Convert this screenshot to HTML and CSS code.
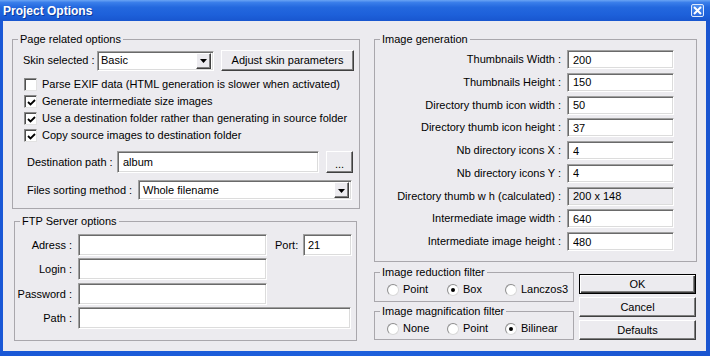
FILE: index.html
```html
<!DOCTYPE html>
<html>
<head>
<meta charset="utf-8">
<link rel="stylesheet" href="styles.css">
</head>
<body>
<div class="window">
  <div class="titlebar">
    <span class="title">Project Options</span>
    <span class="close"><svg width="9" height="9" viewBox="0 0 9 9"><path d="M1 1L8 8M8 1L1 8" stroke="#fff" stroke-width="2" fill="none"/></svg></span>
  </div>
  <div class="body">
    <div class="col-left">
      <fieldset class="group page">
        <legend>Page related options</legend>
        <div class="row skin-row">
          <span class="lbl skin-lbl">Skin selected :</span>
          <div class="combo skin-combo"><span class="combo-text">Basic</span><span class="drop"><svg width="7" height="4" viewBox="0 0 7 4"><path d="M0 0H7L3.5 4Z" fill="#000"/></svg></span></div>
          <button class="btn adjust">Adjust skin parameters</button>
        </div>
        <div class="checks">
          <div class="check"><span class="cb"></span><span>Parse EXIF data (HTML generation is slower when activated)</span></div>
          <div class="check"><span class="cb"><svg width="9" height="9" viewBox="0 0 9 9"><path d="M1 4L3.5 6.5L8 2" stroke="#000" stroke-width="1.8" fill="none"/></svg></span><span>Generate intermediate size images</span></div>
          <div class="check"><span class="cb"><svg width="9" height="9" viewBox="0 0 9 9"><path d="M1 4L3.5 6.5L8 2" stroke="#000" stroke-width="1.8" fill="none"/></svg></span><span>Use a destination folder rather than generating in source folder</span></div>
          <div class="check"><span class="cb"><svg width="9" height="9" viewBox="0 0 9 9"><path d="M1 4L3.5 6.5L8 2" stroke="#000" stroke-width="1.8" fill="none"/></svg></span><span>Copy source images to destination folder</span></div>
        </div>
        <div class="row dest-row">
          <span class="lbl dest-lbl">Destination path :</span>
          <input class="field dest-field" type="text" value="album">
          <button class="btn dots">...</button>
        </div>
        <div class="row sort-row">
          <span class="lbl sort-lbl">Files sorting method :</span>
          <div class="combo sort-combo"><span class="combo-text">Whole filename</span><span class="drop"><svg width="7" height="4" viewBox="0 0 7 4"><path d="M0 0H7L3.5 4Z" fill="#000"/></svg></span></div>
        </div>
      </fieldset>
      <fieldset class="group ftp">
        <legend>FTP Server options</legend>
        <div class="ftp-grid">
          <span class="flbl">Adress :</span>
          <input class="field ftp-field" type="text" value="">
          <span class="port-lbl">Port:</span>
          <input class="field port-field" type="text" value="21">
          <span class="flbl">Login :</span>
          <input class="field ftp-field" type="text" value="">
          <span></span><span></span>
          <span class="flbl">Password :</span>
          <input class="field ftp-field" type="text" value="">
          <span></span><span></span>
          <span class="flbl">Path :</span>
          <input class="field path-field" type="text" value="">
        </div>
      </fieldset>
    </div>
    <div class="col-right">
      <fieldset class="group imggen">
        <legend>Image generation</legend>
        <div class="gen-grid">
          <span class="glbl">Thumbnails Width :</span><input class="field gen-field" type="text" value="200">
          <span class="glbl">Thumbnails Height :</span><input class="field gen-field" type="text" value="150">
          <span class="glbl">Directory thumb icon width :</span><input class="field gen-field" type="text" value="50">
          <span class="glbl">Directory thumb icon height :</span><input class="field gen-field" type="text" value="37">
          <span class="glbl">Nb directory icons X :</span><input class="field gen-field" type="text" value="4">
          <span class="glbl">Nb directory icons Y :</span><input class="field gen-field" type="text" value="4">
          <span class="glbl">Directory thumb w h (calculated) :</span><input class="field gen-field disabled" type="text" value="200 x 148" disabled>
          <span class="glbl">Intermediate image width :</span><input class="field gen-field" type="text" value="640">
          <span class="glbl">Intermediate image height :</span><input class="field gen-field" type="text" value="480">
        </div>
      </fieldset>
      <div class="bottom">
        <div class="filters">
          <fieldset class="group reduce">
            <legend>Image reduction filter</legend>
            <div class="radios">
              <span class="radio"><span class="rb"></span>Point</span>
              <span class="radio"><span class="rb on"></span>Box</span>
              <span class="radio"><span class="rb"></span>Lanczos3</span>
            </div>
          </fieldset>
          <fieldset class="group magnify">
            <legend>Image magnification filter</legend>
            <div class="radios">
              <span class="radio"><span class="rb"></span>None</span>
              <span class="radio"><span class="rb"></span>Point</span>
              <span class="radio"><span class="rb on"></span>Bilinear</span>
            </div>
          </fieldset>
        </div>
        <div class="buttons">
          <button class="btn dlg default">OK</button>
          <button class="btn dlg">Cancel</button>
          <button class="btn dlg">Defaults</button>
        </div>
      </div>
    </div>
  </div>
</div>
</body>
</html>
```

FILE: styles.css
```css
* { box-sizing: border-box; }
html, body { margin: 0; padding: 0; }
body {
  width: 710px;
  height: 356px;
  overflow: hidden;
  font: 11px/13px "Liberation Sans", Arial, sans-serif;
  color: #000;
  background: #fff;
}
.window {
  position: relative;
  width: 710px;
  height: 356px;
  display: flex;
  flex-direction: column;
  background: linear-gradient(to right, #1a58d6, #1e60dc 50%, #1a55d0);
}
.titlebar {
  height: 21px;
  flex: none;
  display: flex;
  align-items: center;
  justify-content: space-between;
  padding: 1px 6px 0 3px;
  background: linear-gradient(#6aa4f4 0%, #3a7eea 12%, #2368de 35%, #1d60da 70%, #1856cf 100%);
  color: #fff;
}
.title {
  font: bold 12px/14px "Liberation Sans", Arial, sans-serif;
  text-shadow: 1px 1px 0 #0c3a9c;
}
.close {
  width: 13px;
  height: 13px;
  margin-top: -1px;
  display: flex;
  align-items: center;
  justify-content: center;
  border: 1px solid #dfe9fb;
  border-radius: 2px;
  background: linear-gradient(#4d8ff0, #2b6ae0);
}
.body {
  flex: 1;
  margin: 0 4px 5px 3px;
  background: #ecebef;
  display: flex;
  gap: 14px;
  padding: 12px 9px 0 9px;
}
.col-left { width: 348px; display: flex; flex-direction: column; }
.col-right { width: 323px; display: flex; flex-direction: column; }

.group {
  margin: 0;
  padding: 0;
  min-width: 0;
  border: 1px solid #a9a7ac;
}
.group legend {
  margin-left: 5px;
  padding: 0 2px;
  line-height: 13px;
}
.page { height: 176px; }
.ftp { height: 126px; margin: 6px 3px 0 2px; }
.imggen { height: 229px; }

.row { display: flex; align-items: center; }
.lbl { flex: none; white-space: nowrap; }

.skin-row { height: 21px; margin-top: 4px; padding-left: 10px; }
.skin-lbl { width: 74px; }
.combo {
  display: flex;
  align-items: center;
  justify-content: space-between;
  background: #fff;
  border: 1px solid #a0a0a0;
  border-right-color: #fff;
  border-bottom-color: #fff;
  box-shadow: inset 1px 1px 0 #6a6a6a, inset -1px -1px 0 #dcdcdc;
  padding: 2px 2px 2px 3px;
}
.skin-combo { width: 117px; height: 20px; }
.sort-combo { width: 214px; height: 20px; padding-left: 4px; }
.combo-text { white-space: nowrap; }
.drop {
  width: 15px;
  height: 16px;
  display: flex;
  align-items: center;
  justify-content: center;
  background: #ecebef;
  border: 1px solid;
  border-color: #fff #404040 #404040 #fff;
  box-shadow: inset -1px -1px 0 #808080;
  padding-top: 1px;
}
.btn {
  font: inherit;
  color: #000;
  background: #ecebef;
  border: 1px solid;
  border-color: #fff #404040 #404040 #fff;
  box-shadow: inset -1px -1px 0 #808080;
  padding: 0;
  margin: 0;
  display: flex;
  align-items: center;
  justify-content: center;
}
.adjust { width: 133px; height: 21px; margin-left: 7px; }

.checks { margin-top: 5px; padding-left: 11px; display: flex; flex-direction: column; }
.check { height: 17px; display: flex; align-items: center; gap: 5px; white-space: nowrap; }
.cb {
  width: 13px;
  height: 13px;
  flex: none;
  background: #fff;
  border: 1px solid;
  border-color: #8a8a8a #e2e2e2 #e2e2e2 #8a8a8a;
  box-shadow: inset 1px 1px 0 #505050;
  display: flex;
  align-items: center;
  justify-content: center;
  padding: 1px 0 0 1px;
}

.field {
  font: inherit;
  color: #000;
  background: #fff;
  border: 1px solid;
  border-color: #a0a0a0 #fff #fff #a0a0a0;
  box-shadow: inset 1px 1px 0 #6a6a6a, inset -1px -1px 0 #dcdcdc;
  padding: 0 0 0 5px;
  margin: 0;
  outline: none;
}
.dest-row { height: 22px; margin-top: 7px; padding-left: 14px; }
.dest-lbl { width: 90px; }
.dest-field { width: 202px; height: 22px; }
.dots { width: 27px; height: 22px; margin-left: 7px; padding-top: 4px; }
.sort-row { height: 20px; margin-top: 7px; padding-left: 14px; }
.sort-lbl { width: 111px; }

.ftp-grid {
  display: grid;
  grid-template-columns: 63px 197px 28px 49px;
  grid-template-rows: 24px 25px 24px 22px;
  align-items: start;
  padding-top: 6px;
}
.flbl {
  height: 22px;
  display: flex;
  align-items: center;
  justify-content: flex-end;
  padding-right: 6px;
  white-space: nowrap;
}
.port-lbl { height: 22px; display: flex; align-items: center; }
.ftp-field { width: 189px; height: 22px; }
.port-field { width: 49px; height: 22px; padding-left: 4px; }
.path-field { grid-column: 2 / 5; width: 273px; height: 22px; }

.gen-grid {
  display: grid;
  grid-template-columns: 192px 107px;
  grid-auto-rows: 19px;
  row-gap: 3.75px;
  padding-top: 4px;
}
.glbl {
  display: flex;
  align-items: center;
  justify-content: flex-end;
  padding-right: 6px;
  white-space: nowrap;
}
.gen-field { width: 107px; height: 19px; }
.gen-field.disabled { background: #ecebef; color: #000; -webkit-text-fill-color: #000; opacity: 1; }

.bottom { display: flex; gap: 5px; }
.filters { width: 200px; margin-top: 4px; display: flex; flex-direction: column; }
.reduce { height: 36px; }
.magnify { height: 35px; margin-top: 3px; }
.radios {
  display: grid;
  grid-template-columns: 60px 58px auto;
  height: 15px;
  margin-top: 3px;
  padding-left: 12px;
}
.radio { display: flex; align-items: center; gap: 4px; white-space: nowrap; }
.rb {
  width: 12px;
  height: 12px;
  flex: none;
  border-radius: 50%;
  border: 1px solid;
  border-color: #8f8f8f #dadada #dadada #8f8f8f;
  background: radial-gradient(circle at 60% 60%, #fff 0 55%, #e9e9ec 100%);
  display: flex;
  align-items: center;
  justify-content: center;
}
.rb.on::after {
  content: "";
  width: 4px;
  height: 4px;
  border-radius: 50%;
  background: #000;
}
.buttons { width: 117px; padding-top: 12px; display: flex; flex-direction: column; gap: 3px; }
.dlg { width: 117px; height: 20px; }
.dlg.default {
  border-color: #000;
  box-shadow: inset 1px 1px 0 #fff, inset -1px -1px 0 #404040, inset -2px -2px 0 #808080;
}
```
